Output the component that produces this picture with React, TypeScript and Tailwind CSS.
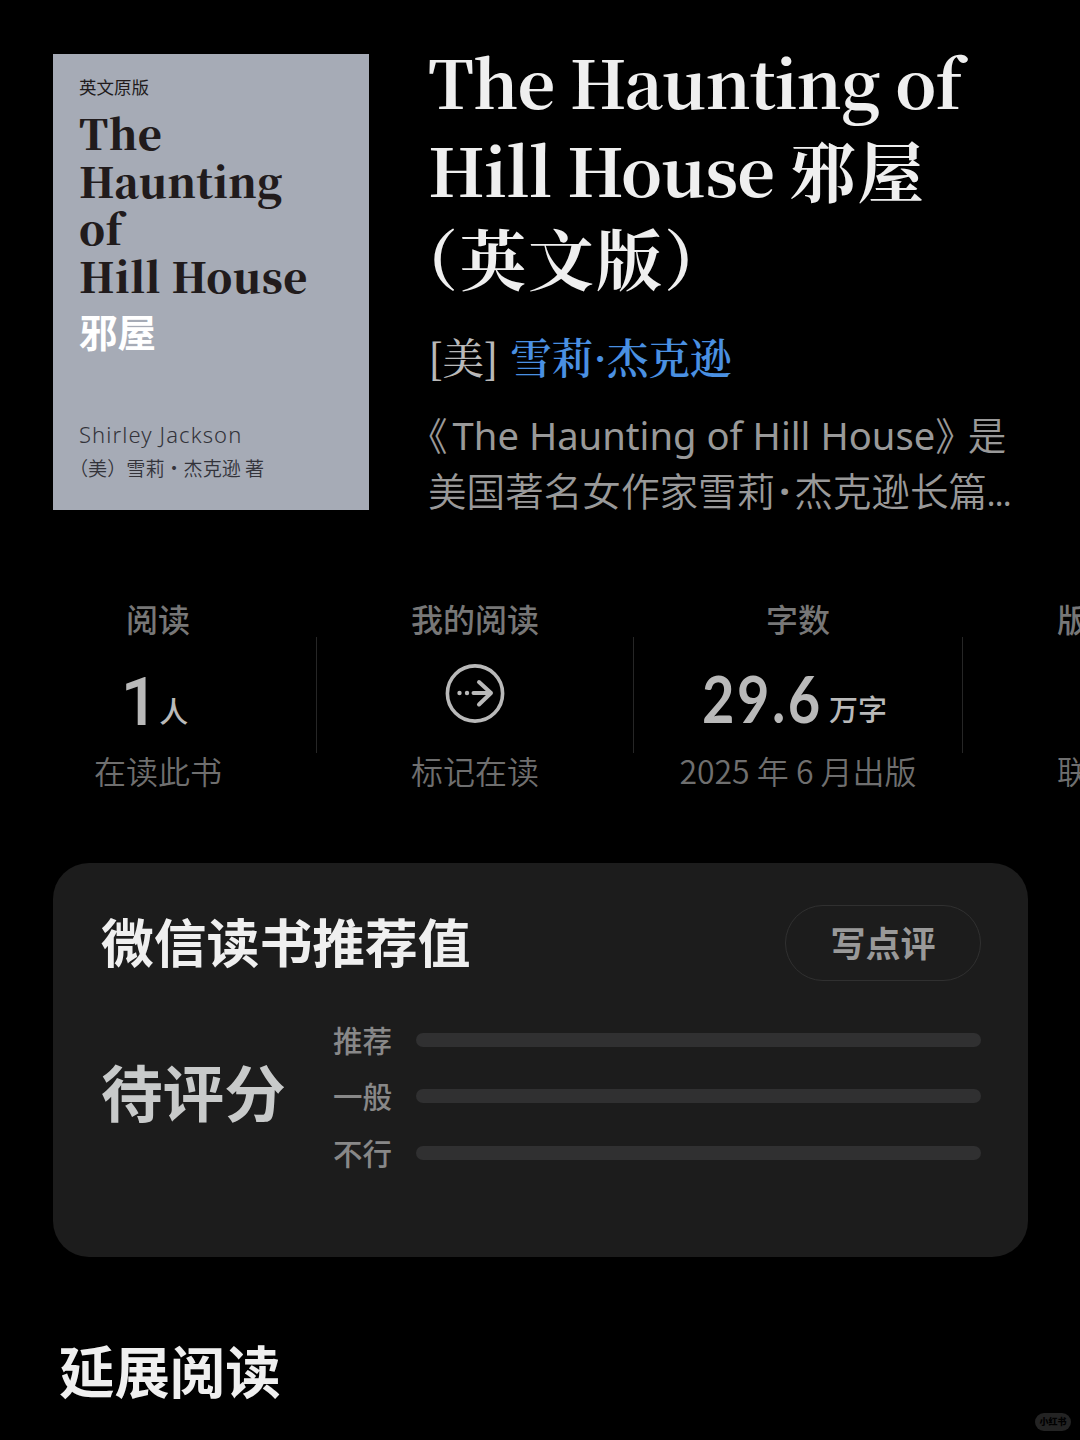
import React from "react";
import clsx from "clsx";

// ─── Types ────────────────────────────────────────────────────────────────────

interface StatProps {
  label: string;
  caption: React.ReactNode;
  className?: string;
  children?: React.ReactNode;
}

const SANS = "font-['Noto_Sans_CJK_SC',sans-serif]";
const SERIF = "font-['Noto_Serif_CJK_SC','Liberation_Serif',serif]";

const RATINGS = ["推荐", "一般", "不行"];

// ─── Cover ────────────────────────────────────────────────────────────────────

function Cover() {
  return (
    <div className="mt-[18px] flex h-[456px] w-[316px] shrink-0 flex-col bg-[#a6abb6] pl-[26px] text-[#211b1c]">
      <p className="mt-[20px] h-[26px] text-[17.5px] leading-[26px]">英文原版</p>
      <div className={clsx(SERIF, "mt-[9px] text-[41px] font-black leading-[47.7px] tracking-[0.4px]")}>
        <p>The</p>
        <p>Haunting</p>
        <p>of</p>
        <p>Hill House</p>
      </div>
      <p className="mt-[5px] h-[50px] text-[38.5px] font-bold leading-[50px] text-white">邪屋</p>
      <p className="mt-[63px] font-['Noto_Sans',sans-serif] text-[22px] font-light leading-[32px] tracking-[1.1px] text-[#33333a]">
        Shirley Jackson
      </p>
      <p className="-ml-[10px] mt-[3px] text-[19.1px] font-[350] leading-[30px] text-[#33333a]">
        （美）雪莉・杰克逊 著
      </p>
    </div>
  );
}

// ─── Stats ────────────────────────────────────────────────────────────────────

function Stat({ label, caption, className, children }: StatProps) {
  return (
    <div className={clsx("flex shrink-0 flex-col items-center whitespace-nowrap", className)}>
      <p className="h-[40px] text-[32px] font-medium leading-[40px] text-[#777]">{label}</p>
      <div className="flex h-[112px] items-start justify-center text-[#b9b9b9]">{children}</div>
      <p className="h-[40px] text-[32px] font-[350] leading-[40px] text-[#6f6f6f]">{caption}</p>
    </div>
  );
}

function Divider() {
  return <div className="mt-[39px] h-[116px] w-px shrink-0 bg-[#262626]" />;
}

function MarkIcon() {
  return (
    <svg width="60" height="60" viewBox="0 0 60 60" fill="none" stroke="currentColor" className="mt-[26px]">
      <circle cx="30" cy="29.5" r="27.6" strokeWidth="3.6" />
      <path d="M28.5 29H46M34 18L46 29L34 40.5" strokeWidth="4" strokeLinecap="round" strokeLinejoin="round" />
      <circle cx="14.5" cy="29" r="2.2" fill="currentColor" stroke="none" />
      <circle cx="22" cy="29" r="2.2" fill="currentColor" stroke="none" />
    </svg>
  );
}

// ─── Page ─────────────────────────────────────────────────────────────────────

export default function App() {
  return (
    <main lang="zh-CN" className={clsx(SANS, "relative flex h-[1440px] w-[1080px] flex-col overflow-hidden bg-black")}>
      <header className="flex h-[598px] shrink-0 pl-[53px] pt-[36px]">
        <Cover />
        <div className="ml-[59px] mt-px whitespace-nowrap">
          <h1 className={clsx(SERIF, "text-[66px] font-bold leading-[88px] text-[#efefef]")}>
            <span className="block tracking-[-0.9px]">The Haunting of</span>
            <span className="block">
              <span className="tracking-[-0.9px]">Hill House </span>
              <span className="tracking-[2px]">邪屋</span>
            </span>
            <span className="-ml-[36px] block tracking-[2px]">（英文版）</span>
          </h1>
          <p className={clsx(SERIF, "mt-[26px] text-[41.5px] font-medium leading-[58px] text-[#b9b9b9]")}>
            [美] <span className="ml-px font-semibold text-[#4a90e2]">雪莉·杰克逊</span>
          </p>
          <div className="mt-[20px] text-[38.6px] font-[350] leading-[56px] text-[#999]">
            <p className="-ml-[19px] h-[56px]">
              《<span className="ml-[5px] font-['Noto_Sans',sans-serif] text-[38.2px] font-normal">The Haunting of Hill House</span>》
              <span className="-ml-[6px]">是</span>
            </p>
            <p className="h-[56px]">
              美国著名女作家雪莉
              <span className="inline-block w-[19px] text-center font-['Noto_Sans',sans-serif] font-bold">·</span>
              杰克逊长篇<span className="font-['Noto_Sans',sans-serif] text-[30px] font-medium">…</span>
            </p>
          </div>
        </div>
      </header>

      <section className="flex h-[193px] shrink-0">
        <Stat label="阅读" caption="在读此书" className="w-[316px]">
          <span className="mr-px font-['Roboto',sans-serif] text-[66px] font-medium leading-[130px]">1</span>
          <span className="mr-[7px] text-[29px] font-medium leading-[144px]">人</span>
        </Stat>
        <Divider />
        <Stat label="我的阅读" caption="标记在读" className="w-[316px]">
          <MarkIcon />
        </Stat>
        <Divider />
        <Stat label="字数" caption="2025 年 6 月出版" className="w-[328px]">
          <span className="w-[127px] origin-left scale-x-[0.86] font-['Lato',sans-serif] text-[65px] font-bold leading-[120px] tracking-[3px]">
            29.6
          </span>
          <span className="mr-[7px] text-[29px] font-medium leading-[140px]">万字</span>
        </Stat>
        <Divider />
        <Stat label="版" caption="联" className="ml-[94px] w-[32px]" />
      </section>

      <section className="ml-[53px] mt-[72px] flex h-[394px] w-[975px] shrink-0 flex-col rounded-[36px] bg-[#1c1c1c] pl-[48px] pr-[47px] pt-[42px]">
        <div className="flex h-[75px] items-center justify-between">
          <h2 className="pb-[5px] text-[52.8px] font-bold leading-[70px] text-[#efefef]">微信读书推荐值</h2>
          <button className="h-[76px] w-[196px] rounded-full border border-[#303030] pb-[2px] text-[35px] font-bold leading-[70px] text-[#999]">
            写点评
          </button>
        </div>
        <div className="mt-[32px] flex items-center">
          <p className="w-[232px] pb-[10px] text-[61.6px] font-bold leading-[80px] text-[#c8caca]">待评分</p>
          <ul className="flex-1">
            {RATINGS.map((name) => (
              <li key={name} className="flex h-[56.3px] items-center">
                <span className="w-[83px] pb-[2px] text-[29.5px] font-medium leading-[40px] text-[#888]">{name}</span>
                <span className="h-[14px] flex-1 rounded-full bg-[#303031]" />
              </li>
            ))}
          </ul>
        </div>
      </section>

      <h2 className="ml-[59px] mt-[72px] text-[55.4px] font-bold leading-[80px] text-[#efefef]">延展阅读</h2>

      <span className="absolute bottom-[9px] right-[9px] h-[18px] w-[36px] rounded-full bg-[#232323] text-center text-[9px] font-black leading-[17px] text-black">
        小红书
      </span>
    </main>
  );
}
